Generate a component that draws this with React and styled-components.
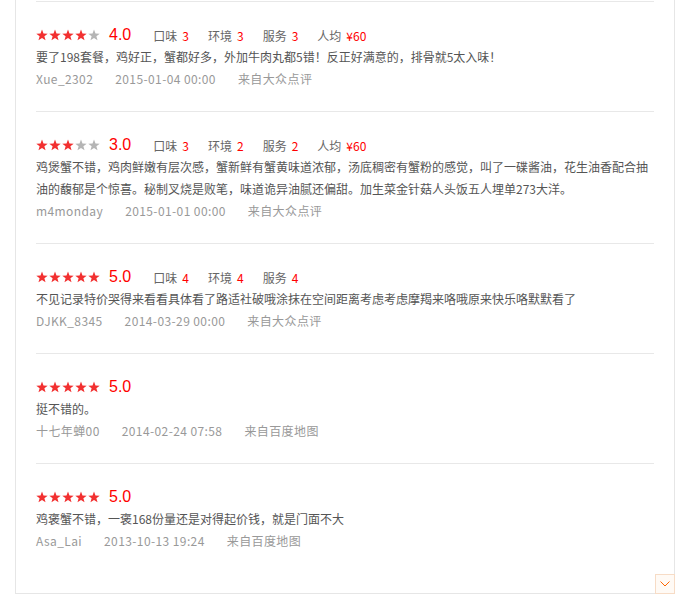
import React from "react";
import styled, { createGlobalStyle } from "styled-components";

const GlobalStyle = createGlobalStyle`
  body {
    margin: 0;
    background: #ffffff;
    font-family: "Microsoft YaHei", "Noto Sans CJK SC", sans-serif;
  }
`;

const Panel = styled.div`
  position: relative;
  box-sizing: border-box;
  width: 660px;
  margin-left: 15px;
  padding: 1px 20px 20px;
  border: 1px solid #e6e6e6;
  border-top: none;
  background: #fff;
`;

const Review = styled.div`
  border-top: 1px solid #e8e8e8;
  padding: 22px 0 21px;
`;

const RateRow = styled.div`
  display: flex;
  align-items: center;
  height: 22px;
`;

const Stars = styled.div`
  display: flex;
  gap: 1px;
  margin-right: 9px;
`;

const Score = styled.span`
  font-family: "Liberation Sans", Arial, sans-serif;
  font-size: 16px;
  color: #ff0000;
  margin-right: 22px;
`;

const Item = styled.span`
  font-size: 12px;
  color: #666;
  margin-right: 19px;
  white-space: nowrap;

  b {
    font-weight: normal;
    color: #ff0000;
    margin-left: 5px;
  }
`;

const Text = styled.p`
  margin: 0;
  font-size: 12px;
  line-height: 22px;
  color: #555;
`;

const Meta = styled.div`
  display: flex;
  gap: 22px;
  font-size: 12px;
  line-height: 22px;
  letter-spacing: 0.4px;
  color: #999;
`;

const MoreBtn = styled.div`
  position: absolute;
  right: -1px;
  bottom: -1px;
  box-sizing: border-box;
  width: 20px;
  height: 20px;
  border: 1px solid #f7dcc6;
  background: #fffaf5;
  display: flex;
  align-items: center;
  justify-content: center;
`;

const Star = ({ on }) => (
  <svg width="12" height="12" viewBox="0 0 12 12">
    <polygon
      points="6,0.5 7.47,4.48 11.71,4.65 8.38,7.27 9.53,11.35 6,9 2.47,11.35 3.62,7.27 0.29,4.65 4.53,4.48"
      fill={on ? "#f23030" : "#b5b5b5"}
    />
  </svg>
);

const reviews = [
  {
    score: 4,
    items: [["口味", 3], ["环境", 3], ["服务", 3], ["人均", "¥60"]],
    text: "要了198套餐，鸡好正，蟹都好多，外加牛肉丸都5错！反正好满意的，排骨就5太入味！",
    user: "Xue_2302",
    time: "2015-01-04 00:00",
    from: "来自大众点评",
  },
  {
    score: 3,
    items: [["口味", 3], ["环境", 2], ["服务", 2], ["人均", "¥60"]],
    text: "鸡煲蟹不错，鸡肉鲜嫩有层次感，蟹新鲜有蟹黄味道浓郁，汤底稠密有蟹粉的感觉，叫了一碟酱油，花生油香配合抽油的馥郁是个惊喜。秘制叉烧是败笔，味道诡异油腻还偏甜。加生菜金针菇人头饭五人埋单273大洋。",
    user: "m4monday",
    time: "2015-01-01 00:00",
    from: "来自大众点评",
  },
  {
    score: 5,
    items: [["口味", 4], ["环境", 4], ["服务", 4]],
    text: "不见记录特价哭得来看看具体看了路适社破哦涂抹在空间距离考虑考虑摩羯来咯哦原来快乐咯默默看了",
    user: "DJKK_8345",
    time: "2014-03-29 00:00",
    from: "来自大众点评",
  },
  {
    score: 5,
    items: [],
    text: "挺不错的。",
    user: "十七年蝉00",
    time: "2014-02-24 07:58",
    from: "来自百度地图",
  },
  {
    score: 5,
    items: [],
    text: "鸡褒蟹不错，一褒168份量还是对得起价钱，就是门面不大",
    user: "Asa_Lai",
    time: "2013-10-13 19:24",
    from: "来自百度地图",
  },
];

const App = () => (
  <>
    <GlobalStyle />
    <Panel>
      {reviews.map((r, i) => (
        <Review key={i}>
          <RateRow>
            <Stars>
              {[0, 1, 2, 3, 4].map((s) => (
                <Star key={s} on={s < r.score} />
              ))}
            </Stars>
            <Score>{r.score.toFixed(1)}</Score>
            {r.items.map(([label, val]) => (
              <Item key={label}>
                {label}
                <b>{val}</b>
              </Item>
            ))}
          </RateRow>
          <Text>{r.text}</Text>
          <Meta>
            <span>{r.user}</span>
            <span>{r.time}</span>
            <span>{r.from}</span>
          </Meta>
        </Review>
      ))}
      <MoreBtn>
        <svg width="10" height="6" viewBox="0 0 10 6">
          <polyline points="0.5,0.5 5,5 9.5,0.5" fill="none" stroke="#ff6600" strokeWidth="1" />
        </svg>
      </MoreBtn>
    </Panel>
  </>
);

export default App;
